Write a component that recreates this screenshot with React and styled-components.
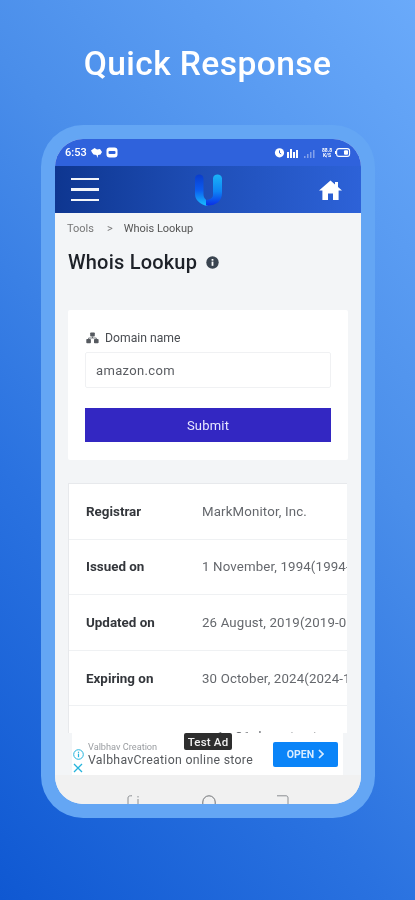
import React from "react";
import styled, { createGlobalStyle } from "styled-components";

const Global = createGlobalStyle`
  html, body { margin: 0; padding: 0; }
  body { font-family: Roboto, "Liberation Sans", sans-serif; }
  * { box-sizing: border-box; }
`;

const Page = styled.div`
  width: 415px;
  height: 900px;
  overflow: hidden;
  background: linear-gradient(228deg, #6aaafa 0%, #4a8eea 38%, #2a72e0 68%, #0f58d2 100%);
  display: flex;
  flex-direction: column;
  align-items: center;
`;
const Headline = styled.h1`
  margin: 43px 0 0;
  height: 40px;
  line-height: 41px;
  font-size: 33.6px;
  font-weight: 500;
  color: #fff;
  letter-spacing: 0.4px;
  filter: blur(0.4px);
`;
const Phone = styled.div`
  margin: 42px 0 0 1px;
  width: 334px;
  height: 693px;
  padding: 14px;
  border-radius: 42px;
  background: #64a6f4;
  filter: blur(0.35px);
`;
const Screen = styled.div`
  width: 100%;
  height: 100%;
  border-radius: 28px;
  overflow: hidden;
  background: #f3f5f7;
  display: flex;
  flex-direction: column;
  position: relative;
`;
const StatusBar = styled.div`
  height: 27px;
  flex: none;
  background: #2f62dc;
  display: flex;
  align-items: center;
  justify-content: space-between;
  padding: 0 10px;
  color: #fff;
`;
const StatusGroup = styled.div`
  display: flex;
  align-items: center;
  gap: ${(p) => p.$gap || 3}px;
`;
const Time = styled.span`
  font-size: 11px;
  font-weight: 500;
`;
const TinyText = styled.span`
  font-size: 5px;
  line-height: 5px;
  font-weight: 700;
  width: 12px;
  text-align: center;
`;
const Header = styled.div`
  height: 47px;
  flex: none;
  background: linear-gradient(90deg, #0e3690 0%, #1f4fb8 50%, #2d62d8 100%);
  display: flex;
  align-items: center;
  justify-content: space-between;
  padding: 0 19px 0 16px;
`;
const Burger = styled.div`
  width: 28px;
  display: flex;
  flex-direction: column;
  gap: 8px;
`;
const BurgerLine = styled.span`
  height: 2.5px;
  background: #fff;
  opacity: 0.95;
`;
const LogoMark = styled.svg`
  margin-right: 2px;
`;
const Crumbs = styled.div`
  flex: none;
  height: 30px;
  padding: 0 12px;
  display: flex;
  align-items: center;
  font-size: 11px;
  color: #777;
`;
const CrumbSep = styled.span`
  margin: 0 11px 0 13px;
  font-size: 11px;
`;
const CrumbActive = styled.span`
  color: #555;
`;
const TitleRow = styled.div`
  flex: none;
  margin-top: 6px;
  padding: 0 13px;
  height: 26px;
  display: flex;
  align-items: center;
  gap: 9px;
`;
const Title = styled.h2`
  margin: 0;
  font-size: 20px;
  font-weight: 500;
  color: #1d2128;
  letter-spacing: 0.2px;
`;
const Content = styled.div`
  flex: none;
  height: 423px;
  margin-top: 35px;
  padding: 0 13px;
  overflow: hidden;
  display: flex;
  flex-direction: column;
  gap: 23px;
`;
const FormCard = styled.div`
  flex: none;
  height: 150px;
  background: #fff;
  border-radius: 2px;
  padding: 21px 17px 0;
`;
const Label = styled.div`
  height: 14px;
  display: flex;
  align-items: center;
  gap: 6px;
  font-size: 12.2px;
  color: #4a4d52;
  margin-left: 1px;
`;
const Input = styled.div`
  margin-top: 7px;
  height: 36px;
  border: 1px solid #f0f1f3;
  border-radius: 2px;
  padding: 0 10px;
  display: flex;
  align-items: center;
  font-size: 13px;
  letter-spacing: 0.35px;
  color: #5a5d62;
`;
const Submit = styled.div`
  margin-top: 20px;
  height: 34px;
  background: #3327c2;
  color: #e8e8ff;
  display: flex;
  align-items: center;
  justify-content: center;
  font-size: 13px;
  font-weight: 400;
  letter-spacing: 0.2px;
`;
const Table = styled.div`
  flex: none;
  width: 279px;
  background: #fff;
  border: 1px solid #e7e9ec;
  border-right: 0;
  border-bottom: 0;
  overflow: hidden;
`;
const Row = styled.div`
  height: 55.6px;
  display: flex;
  align-items: center;
  padding-left: 17px;
  padding-top: ${(p) => (p.$low ? 5 : 0)}px;
  border-bottom: 1px solid #eff1f3;
  white-space: nowrap;
`;
const RowKey = styled.span`
  width: 116px;
  flex: none;
  font-size: 13.4px;
  font-weight: 700;
  color: #33363b;
`;
const RowValue = styled.span`
  font-size: 13.25px;
  color: #65686d;
  letter-spacing: 0.15px;
`;
const Ad = styled.div`
  flex: none;
  margin: 0 18px 0 17px;
  height: 42px;
  background: #fff;
  display: flex;
  align-items: center;
  position: relative;
`;
const AdMarks = styled.div`
  width: 16px;
  margin: 14px 2px 0 -2px;
  display: flex;
  flex-direction: column;
  align-items: center;
  gap: 3px;
`;
const AdText = styled.div`
  flex: 1;
  display: flex;
  flex-direction: column;
`;
const AdBrand = styled.span`
  font-size: 9.2px;
  color: #9a9da1;
  line-height: 11px;
`;
const AdLine = styled.span`
  font-size: 12.3px;
  color: #55585c;
  line-height: 16px;
  letter-spacing: 0.3px;
`;
const AdButton = styled.div`
  width: 65px;
  height: 25px;
  margin-right: 5px;
  background: #0a84f8;
  border-radius: 2px;
  color: #d8ecff;
  font-size: 10.5px;
  font-weight: 700;
  display: flex;
  align-items: center;
  justify-content: center;
  gap: 4px;
`;
const TestBadge = styled.div`
  position: absolute;
  left: 112px;
  top: 0;
  width: 48px;
  height: 17px;
  border-radius: 2px;
  background: #2e2e2e;
  color: #f2f2f2;
  font-size: 11.5px;
  font-weight: 500;
  letter-spacing: 0.2px;
  display: flex;
  align-items: center;
  justify-content: center;
`;
const NavBar = styled.div`
  flex: 1;
  background: #f1f1f1;
  display: flex;
  justify-content: space-between;
  align-items: flex-start;
  padding: 20px 72px 0 72px;
`;

const Cloud = () => (
  <svg width="13" height="12" viewBox="0 0 13 12" fill="#fff">
    <path d="M1 3.5 L4.5 1 L7 2.5 L10 2 L12 5 L10.5 7.5 L8 8 L7.6 11 L6.4 8 L3.5 7.5 L2 5.5Z" />
  </svg>
);
const AppChip = () => (
  <svg width="12" height="11" viewBox="0 0 12 11">
    <rect x="0.5" y="0.5" width="11" height="10" rx="3" fill="#fff" />
    <rect x="2.5" y="4" width="7" height="3" rx="1" fill="#2f62dc" />
  </svg>
);
const Alarm = () => (
  <svg width="11" height="11" viewBox="0 0 11 11">
    <circle cx="5.5" cy="5.8" r="4.6" fill="#fff" />
    <path d="M5.5 3.4V6l1.7 1" stroke="#2f62dc" fill="none" strokeWidth="1" />
  </svg>
);
const Signal = () => (
  <svg width="32" height="12" viewBox="0 0 32 12" fill="#fff">
    <rect x="0" y="5" width="2" height="6" />
    <rect x="3" y="2" width="2" height="9" />
    <rect x="6" y="5" width="2" height="6" />
    <rect x="9" y="3" width="2" height="8" />
    <g opacity="0.4">
      <rect x="17" y="9" width="1.5" height="2" />
      <rect x="20" y="7" width="1.5" height="4" />
      <rect x="23" y="5" width="1.5" height="6" />
      <rect x="26" y="3" width="1.5" height="8" />
    </g>
  </svg>
);
const Battery = () => (
  <svg width="16" height="9" viewBox="0 0 16 9">
    <rect x="1.6" y="0.6" width="13" height="7.8" rx="2.4" fill="none" stroke="#fff" strokeWidth="1.1" />
    <rect x="9" y="2.2" width="4" height="4.6" rx="1" fill="#fff" />
    <rect x="0" y="3" width="1" height="3" fill="#fff" />
  </svg>
);
const Logo = () => (
  <LogoMark width="28" height="32" viewBox="0 0 28 32">
    <defs>
      <linearGradient id="lgL" x1="0" y1="0" x2="0" y2="1">
        <stop offset="0" stopColor="#0a3ccc" />
        <stop offset="0.5" stopColor="#0b5cf0" />
        <stop offset="1" stopColor="#18c0ff" />
      </linearGradient>
      <linearGradient id="lgR" x1="0" y1="0" x2="0" y2="1">
        <stop offset="0" stopColor="#1ab4f8" />
        <stop offset="0.55" stopColor="#0e84f5" />
        <stop offset="1" stopColor="#0a2ee6" />
      </linearGradient>
    </defs>
    <path d="M1 4.5 V20 C1 26 6 30 13 32 L16 28 C11 26 9.5 23.5 9.5 20 V4.5 C9.5 -1 1 -1 1 4.5Z" fill="url(#lgL)" />
    <path d="M19 4.5 V21 C19 24 16 25.5 12 26 L12 31.5 C22 32 28 27 28 19 V4.5 C28 -1 19 -1 19 4.5Z" fill="url(#lgR)" />
  </LogoMark>
);
const Home = () => (
  <svg width="23" height="20" viewBox="0 0 23 20" fill="#fff">
    <path d="M11.5 0.5 L16 4.4 V2 H19 V7 L23 10.5 H19.6 V20 H14 V13.5 H9 V20 H3.4 V10.5 H0 Z" />
  </svg>
);
const Info = () => (
  <svg width="13" height="13" viewBox="0 0 13 13">
    <circle cx="6.5" cy="6.5" r="6.2" fill="#3a4450" />
    <rect x="5.6" y="5.6" width="1.8" height="4.2" fill="#fff" />
    <rect x="5.6" y="3" width="1.8" height="1.7" fill="#fff" />
  </svg>
);
const Sitemap = () => (
  <svg width="13" height="12" viewBox="0 0 13 12" fill="#565a60">
    <rect x="4.2" y="0.5" width="4.6" height="4" rx="0.8" />
    <rect x="0.3" y="7" width="4.6" height="4.2" rx="0.8" />
    <rect x="8" y="7" width="4.6" height="4.2" rx="0.8" />
    <path d="M6.5 4.5V6M2.6 7V6H10.3V7" stroke="#565a60" strokeWidth="0.8" fill="none" />
  </svg>
);
const AdInfo = () => (
  <svg width="11" height="11" viewBox="0 0 11 11">
    <circle cx="5.5" cy="5.5" r="4.8" fill="none" stroke="#25b4dc" strokeWidth="1" />
    <rect x="4.9" y="4.6" width="1.2" height="3.6" fill="#25b4dc" />
    <rect x="4.9" y="2.7" width="1.2" height="1.2" fill="#25b4dc" />
  </svg>
);
const AdClose = () => (
  <svg width="10" height="10" viewBox="0 0 10 10">
    <path d="M1 1L9 9M9 1L1 9" stroke="#25b4dc" strokeWidth="1.3" />
  </svg>
);
const Chevron = () => (
  <svg width="6" height="10" viewBox="0 0 6 10">
    <path d="M1 1L5 5L1 9" stroke="#d8ecff" strokeWidth="1.7" fill="none" />
  </svg>
);
const NavBack = () => (
  <svg width="14" height="10" viewBox="0 0 14 10" fill="none" stroke="#8b8e92" strokeWidth="1">
    <path d="M1 10V3C1 1.5 2 0.8 3.5 0.8H5" />
    <path d="M11 4V10M11 1V2.5" />
  </svg>
);
const NavHome = () => (
  <svg width="14" height="10" viewBox="0 0 14 10" fill="none" stroke="#6f7276" strokeWidth="1">
    <path d="M0.8 10V7A6.2 6.2 0 0 1 13.2 7V10" />
  </svg>
);
const NavRecent = () => (
  <svg width="12" height="10" viewBox="0 0 12 10" fill="none" stroke="#8b8e92" strokeWidth="1">
    <path d="M0 0.8H9C10.4 0.8 11 1.6 11 3V10" />
  </svg>
);

const rows = [
  ["Registrar", "MarkMonitor, Inc."],
  ["Issued on", "1 November, 1994(1994-11-01)"],
  ["Updated on", "26 August, 2019(2019-08-26)"],
  ["Expiring on", "30 October, 2024(2024-10-30)"],
  ["", "ns1.p31.dynect.net"],
];

export default function App() {
  return (
    <Page>
      <Global />
      <Headline>Quick Response</Headline>
      <Phone>
        <Screen>
          <StatusBar>
            <StatusGroup>
              <Time>6:53</Time>
              <Cloud />
              <AppChip />
            </StatusGroup>
            <StatusGroup $gap={2}>
              <Alarm />
              <Signal />
              <TinyText>
                88.8
                <br />
                K/S
              </TinyText>
              <Battery />
            </StatusGroup>
          </StatusBar>
          <Header>
            <Burger>
              <BurgerLine />
              <BurgerLine />
              <BurgerLine />
            </Burger>
            <Logo />
            <Home />
          </Header>
          <Crumbs>
            Tools
            <CrumbSep>&gt;</CrumbSep>
            <CrumbActive>Whois Lookup</CrumbActive>
          </Crumbs>
          <TitleRow>
            <Title>Whois Lookup</Title>
            <Info />
          </TitleRow>
          <Content>
            <FormCard>
              <Label>
                <Sitemap />
                Domain name
              </Label>
              <Input>amazon.com</Input>
              <Submit>Submit</Submit>
            </FormCard>
            <Table>
              {rows.map(([k, v], i) => (
                <Row key={i} $low={i === 4}>
                  <RowKey>{k}</RowKey>
                  <RowValue>{v}</RowValue>
                </Row>
              ))}
            </Table>
          </Content>
          <Ad>
            <AdMarks>
              <AdInfo />
              <AdClose />
            </AdMarks>
            <AdText>
              <AdBrand>Valbhav Creation</AdBrand>
              <AdLine>ValbhavCreation online store</AdLine>
            </AdText>
            <AdButton>
              OPEN
              <Chevron />
            </AdButton>
            <TestBadge>Test Ad</TestBadge>
          </Ad>
          <NavBar>
            <NavBack />
            <NavHome />
            <NavRecent />
          </NavBar>
        </Screen>
      </Phone>
    </Page>
  );
}
